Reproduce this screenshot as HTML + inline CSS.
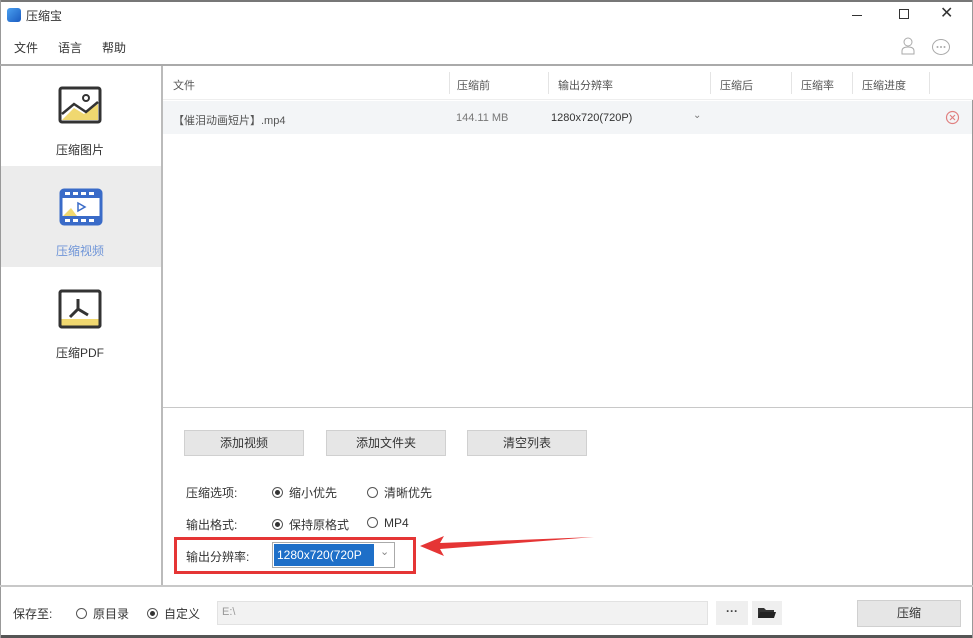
<!DOCTYPE html>
<html><head><meta charset="utf-8"><style>
*{margin:0;padding:0;box-sizing:border-box}
body{width:973px;height:638px;overflow:hidden;background:#fff;font-family:"Liberation Sans","Noto Sans CJK SC",sans-serif;font-size:12px;color:#333;position:relative}
.a{position:absolute}
.btn{position:absolute;background:#e6e6e6;border:1px solid #d0d0d0;text-align:center;line-height:24px;font-size:12px;color:#333}
.radio{display:inline-block;width:11px;height:11px;border:1px solid #555;border-radius:50%;vertical-align:-1px;margin-right:6px;position:relative}
.radio.on::after{content:"";position:absolute;left:2px;top:2px;width:5px;height:5px;border-radius:50%;background:#333}
</style></head><body>
<div class="a" style="left:0;top:0;width:973px;height:2px;background:#777"></div>
<div class="a" style="left:0;bottom:0;width:973px;height:3px;background:#555"></div>
<div class="a" style="left:0;top:0;width:1px;height:638px;background:#999"></div>
<div class="a" style="right:0;top:0;width:1px;height:638px;background:#999"></div>
<!-- title -->
<div class="a" style="left:7px;top:8px;width:14px;height:14px;border-radius:3px;background:linear-gradient(135deg,#4aa0f0,#1a5bc0)"></div>
<div class="a" style="left:26px;top:7px;font-size:12px">压缩宝</div>
<div class="a" style="left:852px;top:15px;width:10px;height:1px;background:#333"></div>
<div class="a" style="left:899px;top:9px;width:10px;height:10px;border:1px solid #333"></div>
<div class="a" style="left:940px;top:3px;font-size:16px;color:#333">✕</div>
<div class="a" style="left:14px;top:39px">文件</div>
<div class="a" style="left:58px;top:39px">语言</div>
<div class="a" style="left:102px;top:39px">帮助</div>
<svg class="a" style="left:900px;top:37px" width="16" height="18"><circle cx="8" cy="5" r="4" fill="none" stroke="#aaa"/><path d="M2 17 v-3 q0-4 6-4 q6 0 6 4 v3z" fill="none" stroke="#aaa"/></svg>
<svg class="a" style="left:931px;top:38px" width="20" height="18"><ellipse cx="10" cy="9" rx="8.5" ry="7.5" fill="none" stroke="#aaa"/><circle cx="6.5" cy="9" r="1" fill="#aaa"/><circle cx="10" cy="9" r="1" fill="#aaa"/><circle cx="13.5" cy="9" r="1" fill="#aaa"/></svg>
<div class="a" style="left:0;top:64px;width:973px;height:2px;background:#aaa"></div>
<!-- sidebar -->
<div class="a" style="left:161px;top:66px;width:2px;height:520px;background:#bbb"></div>
<div class="a" style="left:1px;top:166px;width:160px;height:101px;background:#ececec"></div>
<svg class="a" style="left:58px;top:86px" width="44" height="40"><rect x="2" y="2" width="40" height="34" rx="2" fill="#fff" stroke="#333" stroke-width="3"/><path d="M4 34 L16 22 L26 28 L40 18 V34Z" fill="#f0d870"/><path d="M4 28 L16 18 L28 26 L40 16" fill="none" stroke="#333" stroke-width="2.5"/><circle cx="28" cy="12" r="3" fill="none" stroke="#333" stroke-width="2"/></svg>
<div class="a" style="left:56px;top:141px">压缩图片</div>
<svg class="a" style="left:59px;top:188px" width="44" height="38"><rect x="2" y="2" width="40" height="34" rx="3" fill="#fff" stroke="#3a6bc8" stroke-width="3"/><rect x="2" y="2" width="40" height="8" fill="#3a6bc8"/><rect x="2" y="28" width="40" height="8" fill="#3a6bc8"/><g fill="#fff"><rect x="6" y="4" width="5" height="3"/><rect x="14" y="4" width="5" height="3"/><rect x="22" y="4" width="5" height="3"/><rect x="30" y="4" width="5" height="3"/><rect x="6" y="31" width="5" height="3"/><rect x="14" y="31" width="5" height="3"/><rect x="22" y="31" width="5" height="3"/><rect x="30" y="31" width="5" height="3"/></g><path d="M4 28 L12 20 L18 28Z" fill="#f0d870"/><path d="M19 15 L26 19 L19 23Z" fill="none" stroke="#3a6bc8" stroke-width="1.5"/></svg>
<div class="a" style="left:56px;top:242px;color:#6f95d8">压缩视频</div>
<svg class="a" style="left:58px;top:289px" width="44" height="40"><rect x="2" y="2" width="40" height="36" rx="2" fill="#fff" stroke="#333" stroke-width="3"/><path d="M2 30 H42 V38 H2Z" fill="#f0d870"/><rect x="2" y="2" width="40" height="36" rx="2" fill="none" stroke="#333" stroke-width="3"/><path d="M20 10 V20 L12 28 M20 20 L30 26" fill="none" stroke="#333" stroke-width="3"/></svg>
<div class="a" style="left:56px;top:344px">压缩PDF</div>
<!-- table -->
<div class="a" style="left:163px;top:66px;width:810px;height:34px;background:#fff;border-bottom:1px solid #eee"></div>
<div class="a" style="left:173px;top:77px;font-size:11px;color:#555">文件</div>
<div class="a" style="left:457px;top:77px;font-size:11px;color:#555">压缩前</div>
<div class="a" style="left:558px;top:77px;font-size:11px;color:#555">输出分辨率</div>
<div class="a" style="left:720px;top:77px;font-size:11px;color:#555">压缩后</div>
<div class="a" style="left:801px;top:77px;font-size:11px;color:#555">压缩率</div>
<div class="a" style="left:862px;top:77px;font-size:11px;color:#555">压缩进度</div>
<div class="a" style="left:449px;top:72px;width:1px;height:22px;background:#e4e4e4"></div>
<div class="a" style="left:548px;top:72px;width:1px;height:22px;background:#e4e4e4"></div>
<div class="a" style="left:710px;top:72px;width:1px;height:22px;background:#e4e4e4"></div>
<div class="a" style="left:791px;top:72px;width:1px;height:22px;background:#e4e4e4"></div>
<div class="a" style="left:852px;top:72px;width:1px;height:22px;background:#e4e4e4"></div>
<div class="a" style="left:929px;top:72px;width:1px;height:22px;background:#e4e4e4"></div>
<div class="a" style="left:163px;top:101px;width:809px;height:33px;background:#f3f5f7"></div>
<div class="a" style="left:173px;top:112px;font-size:11px;color:#555">【催泪动画短片】.mp4</div>
<div class="a" style="left:456px;top:112px;font-size:11px;color:#777">144.11 MB</div>
<div class="a" style="left:551px;top:112px;font-size:11px;color:#333">1280x720(720P)</div>
<div class="a" style="left:693px;top:110px;font-size:10px;color:#777">⌄</div>
<svg class="a" style="left:945px;top:110px" width="15" height="15"><circle cx="7.5" cy="7.5" r="6" fill="none" stroke="#e08080" stroke-width="1.2"/><path d="M5 5 L10 10 M10 5 L5 10" stroke="#e08080" stroke-width="1.2"/></svg>
<!-- bottom panel -->
<div class="a" style="left:163px;top:407px;width:809px;height:1px;background:#c8c8c8"></div>
<div class="a" style="left:163px;top:408px;width:809px;height:178px;background:#fff"></div>
<div class="btn" style="left:184px;top:430px;width:120px;height:26px">添加视频</div>
<div class="btn" style="left:326px;top:430px;width:120px;height:26px">添加文件夹</div>
<div class="btn" style="left:467px;top:430px;width:120px;height:26px">清空列表</div>
<div class="a" style="left:186px;top:484px">压缩选项:</div>
<div class="a" style="left:272px;top:484px"><span class="radio on"></span>缩小优先</div>
<div class="a" style="left:367px;top:484px"><span class="radio"></span>清晰优先</div>
<div class="a" style="left:186px;top:516px">输出格式:</div>
<div class="a" style="left:272px;top:516px"><span class="radio on"></span>保持原格式</div>
<div class="a" style="left:367px;top:516px"><span class="radio"></span>MP4</div>
<div class="a" style="left:174px;top:537px;width:242px;height:37px;border:3px solid #e53535"></div>
<div class="a" style="left:186px;top:548px">输出分辨率:</div>
<div class="a" style="left:272px;top:542px;width:123px;height:26px;border:1px solid #aaa;background:#fff"></div>
<div class="a" style="left:274px;top:544px;width:100px;height:22px;background:#1e6fc8;color:#fff;line-height:22px;padding-left:3px;font-size:12px">1280x720(720P</div>
<div class="a" style="left:380px;top:545px;font-size:11px;color:#888">⌄</div>
<svg class="a" style="left:418px;top:534px" width="180" height="24"><path d="M2 12 L26 2 L22 9 L176 3 L22 15 L26 22Z" fill="#e53535"/></svg>
<!-- footer -->
<div class="a" style="left:0;top:585px;width:973px;height:2px;background:#c8c8c8"></div>
<div class="a" style="left:13px;top:605px">保存至:</div>
<div class="a" style="left:76px;top:605px"><span class="radio"></span>原目录</div>
<div class="a" style="left:147px;top:605px"><span class="radio on"></span>自定义</div>
<div class="a" style="left:217px;top:601px;width:491px;height:24px;background:#f2f2f2;border:1px solid #e2e2e2;color:#999;padding:4px 4px;font-size:11px">E:\</div>
<div class="a" style="left:716px;top:601px;width:32px;height:24px;background:#efefef;text-align:center;line-height:20px;font-weight:bold;color:#444">···</div>
<div class="a" style="left:752px;top:601px;width:30px;height:24px;background:#efefef"></div>
<svg class="a" style="left:757px;top:605px" width="20" height="15"><path d="M1 3 H7 L9 5 H17 V13 H1Z" fill="#333"/><path d="M3 7 H19 L17 13 H1Z" fill="#222"/></svg>
<div class="btn" style="left:857px;top:600px;width:104px;height:27px;line-height:25px">压缩</div>
</body></html>
